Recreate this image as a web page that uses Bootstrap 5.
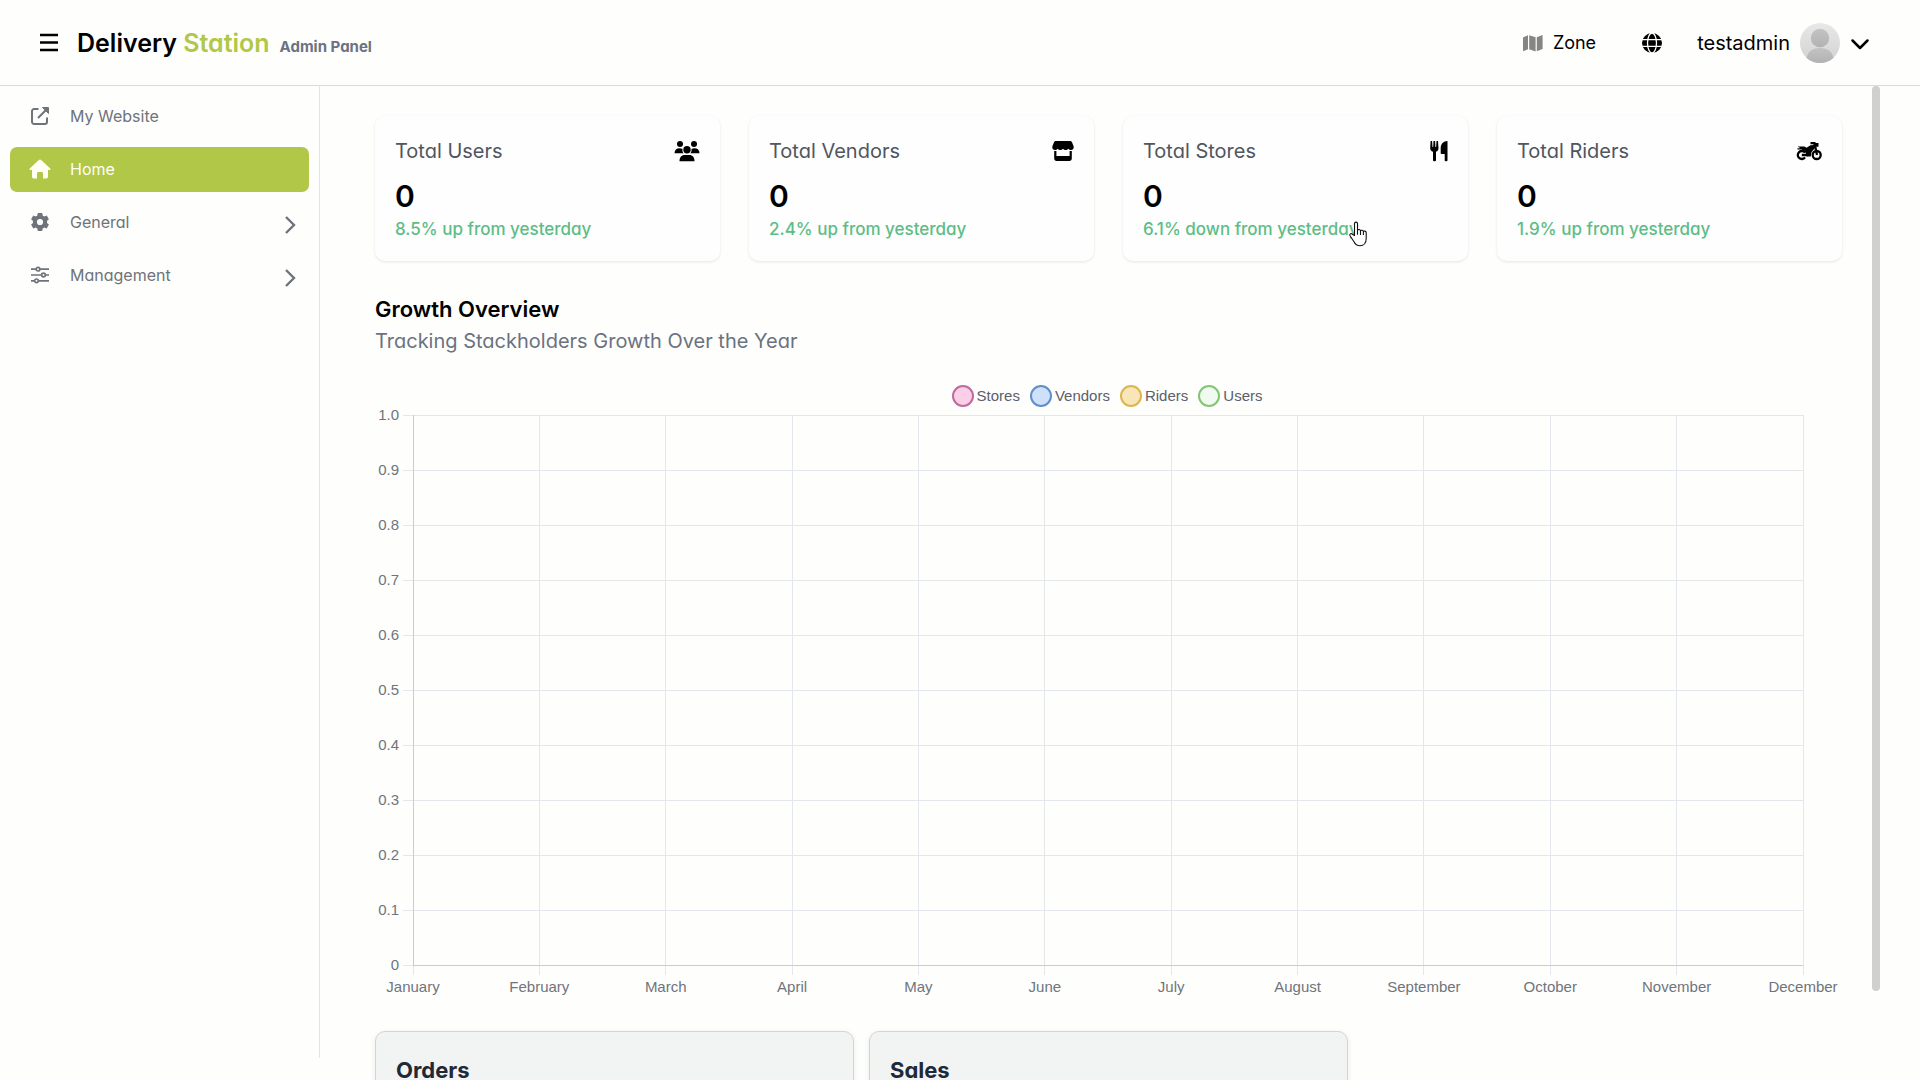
<!DOCTYPE html>
<html lang="en">
<head>
<meta charset="utf-8">
<meta name="viewport" content="width=device-width, initial-scale=1">
<title>Delivery Station Admin Panel</title>
<link href="https://cdn.jsdelivr.net/npm/bootstrap@5.3.0/dist/css/bootstrap.min.css" rel="stylesheet">
<style>
  :root { --brand: #b1c748; --ink-soft: #6f737a; }
  body { font-family: Inter, "Noto Sans", sans-serif; font-feature-settings: "cv11"; background: #fefefd; color: #000; height: 100vh; overflow: hidden; }
  svg { display: block; flex: none; }
  .topbar { height: 86px; border-bottom: 1px solid #d9dbdb; padding: 0 50px 16px 38px; }
  .icon-btn { border: 0; background: none; padding: 0; color: #000; }
  .menu-btn { margin-right: 17px; }
  .brand-link { gap: 10px; }
  .brand-name { font-size: 25px; line-height: 30px; font-weight: 600; color: #000; }
  .brand-name span { color: var(--brand); }
  .brand-tag { font-size: 15px; line-height: 20px; font-weight: 700; color: #6b7280; }
  .zone-link { font-size: 18px; line-height: 24px; color: #000; gap: 9px; }
  .globe-btn { margin: 0 35px 0 46px; }
  .account { font-size: 20px; line-height: 28px; }
  .sidebar { width: 320px; height: calc(100vh - 108px); border-right: 1px solid #e2e3e6; padding: 8px 10px; }
  .side-link { height: 45px; border-radius: 7px; padding: 0 11px 2px 20px; color: var(--ink-soft); font-size: 16px; line-height: 24px; }
  .side-link:hover { color: var(--ink-soft); }
  .side-link.active { background: var(--brand); color: #fffff4; }
  .side-chevron { margin-top: 6px; }
  .main-area { padding: 30px 30px 0 55px; margin-right: 48px; height: calc(100vh - 86px); overflow: hidden; }
  .scroll-thumb { right: 40px; top: 86px; width: 8px; height: calc(100vh - 175px); border-radius: 4px; background: #d0d0ce; }
  .stat-row { --bs-gutter-x: 29px; }
  .stat-card { background: #fefefe; border-radius: 10px; padding: 20px; box-shadow: 0 1px 3px rgba(0,0,0,.1); }
  .stat-title { font-size: 20px; line-height: 30px; color: #4f5660; }
  .stat-value { font-size: 30px; line-height: 36px; font-weight: 600; }
  .stat-note { font-size: 17px; line-height: 24px; font-weight: 500; color: #5cbd85; padding-top: 3px; }
  .growth { padding-top: 33px; }
  .section-title { font-size: 22px; line-height: 30px; font-weight: 600; }
  .section-sub { font-size: 20px; line-height: 30px; color: #6b7280; padding-top: 2px; margin-bottom: 29px; }
  .chart-legend { gap: 10px; padding: 0 2px 8px 0; font: 15px/20px "Liberation Sans", Arial, sans-serif; color: #5b606b; }
  .legend-key { gap: 3px; }
  .swatch { width: 22px; height: 22px; border-radius: 50%; border: 2px solid; }
  .sw-stores { background: #fbcfe8; border-color: #c16a9d; }
  .sw-vendors { background: #cfe0fb; border-color: #5f8fc9; }
  .sw-riders { background: #f9e6b8; border-color: #dcb54c; }
  .sw-users { background: #effaf0; border-color: #83c672; }
  .plot-wrap { padding: 0 39px 0 38px; }
  .plot { width: 100%; height: 550px; overflow: visible; font: 15px "Liberation Sans", Arial, sans-serif; }
  .plot line { stroke: #e3e6ea; shape-rendering: crispEdges; }
  .plot line.axis { stroke: #c9cdd1; }
  .plot text { fill: #70747c; }
  .panels { gap: 15px; padding-top: 66px; }
  .panel { width: 479px; height: 300px; border: 1px solid #d1d5db; border-radius: 10px; background: #f2f4f4; padding: 23px 20px; box-shadow: 0 2px 6px rgba(0,0,0,.08); }
  .panel h2 { font-size: 22px; line-height: 30px; font-weight: 700; color: #1f2937; }
  .pointer { left: 1348px; top: 221px; z-index: 5; }
</style>
<script src="https://cdn.jsdelivr.net/npm/bootstrap@5.3.0/dist/js/bootstrap.bundle.min.js"></script>
</head>
<body>
<header class="topbar d-flex align-items-end justify-content-between">
  <div class="d-flex align-items-center h-100 pt-3">
    <button class="icon-btn menu-btn" type="button" aria-label="Toggle menu">
      <svg width="22" height="22" viewBox="0 0 22 22" stroke="currentColor" stroke-width="2.400"><path d="M2 3h18M2 10.500h18M2 18h18"/></svg>
    </button>
    <a href="#" class="brand-link text-decoration-none d-flex align-items-baseline">
      <span class="brand-name">Delivery <span>Station</span></span>
      <span class="brand-tag">Admin Panel</span>
    </a>
  </div>
  <div class="d-flex align-items-center h-100 pt-3">
    <a href="#" class="zone-link d-flex align-items-center text-decoration-none">
      <svg width="22" height="18" viewBox="0 0 22 18" fill="#858585"><path d="M1 3.500 6 1.200v14L1 17.300zM7.200 1.200l6.400 2v14.200l-6.400-2.100zM14.800 3.200 20.600 1v14l-5.800 2.300z"/></svg>
      <span>Zone</span>
    </a>
    <button class="icon-btn globe-btn" type="button" aria-label="Language">
      <svg width="20" height="20" viewBox="0 0 20 20"><circle cx="10" cy="10" r="10"/><g fill="none" stroke="#fefefd" stroke-width="1.300"><ellipse cx="10" cy="10" rx="4.500" ry="10"/><path d="M0 6.700h20M0 13.300h20"/></g></svg>
    </button>
    <button class="icon-btn account d-flex align-items-center" type="button">
      <span>testadmin</span>
      <svg class="ms-2 me-2" width="44" height="40" viewBox="-2 0 44 40"><defs><linearGradient id="bg" x1="0" y1="0" x2="0" y2="1"><stop stop-color="#e8e8e8"/><stop offset="1" stop-color="#d2d2d2"/></linearGradient><linearGradient id="fg" x1="0" y1="0" x2="0" y2="1"><stop stop-color="#c3c3c3"/><stop offset="1" stop-color="#b2b2b2"/></linearGradient><clipPath id="c"><circle cx="20" cy="20" r="20"/></clipPath></defs><circle cx="20" cy="20" r="20" fill="url(#bg)"/><g clip-path="url(#c)" fill="url(#fg)"><circle cx="20" cy="15" r="9.200"/><path d="M6.500 40V37c0-8 5.500-12 13.500-12s13.500 4 13.500 12v3z"/></g></svg>
      <svg width="20" height="20" viewBox="0 0 20 20" fill="none" stroke="currentColor" stroke-width="2.500" stroke-linecap="round" stroke-linejoin="round"><path d="m2.500 7.500 7.500 7.500L17.500 7.500"/></svg>
    </button>
  </div>
</header>

<div class="d-flex align-items-start">
  <nav class="sidebar d-flex flex-column gap-2 flex-shrink-0">
    <a href="#" class="side-link d-flex align-items-center text-decoration-none">
      <svg width="20" height="20" viewBox="0 0 20 20" fill="none" stroke="currentColor" stroke-width="2"><path d="M8.500 3H4.200A2.200 2.200 0 0 0 2 5.200v10.600A2.200 2.200 0 0 0 4.200 18h10.600a2.200 2.200 0 0 0 2.200-2.200V11.500M8 12 16.500 3.500"/><path d="M12.500 1.500h6v6z" fill="currentColor" stroke-width="1"/></svg>
      <span class="ms-3 ps-1">My Website</span>
    </a>
    <a href="#" class="side-link active d-flex align-items-center text-decoration-none">
      <svg width="20" height="20" viewBox="0 0 20 20" fill="currentColor" overflow="visible"><path d="M8.800 1a1.700 1.700 0 0 1 2.400 0l9 8.400c.7.700.3 1.700-.6 1.700H18v6.700c0 1-.700 1.700-1.700 1.700H13v-5c0-1-.600-1.500-1.500-1.500h-3C7.600 13 7 13.500 7 14.500v5H3.700c-1 0-1.700-.7-1.700-1.700v-6.700H.4c-.9 0-1.300-1-.6-1.700z"/></svg>
      <span class="ms-3 ps-1">Home</span>
    </a>
    <a href="#" class="side-link d-flex align-items-center text-decoration-none">
      <svg width="20" height="20" viewBox="0 0 20 20" fill="currentColor"><path fill-rule="evenodd" d="M7.800 1h4.400l.5 2.500 1.500.9 2.500-.9 2.200 3.800L17 9.100v1.800l1.900 1.700-2.200 3.800-2.500-.8-1.500.9-.5 2.500H7.800l-.5-2.500-1.500-.9-2.500.8-2.200-3.800L3 10.900V9.100L1.100 7.300l2.200-3.800 2.500.9 1.500-.9zM10 6.900a3.100 3.100 0 1 0 0 6.200 3.100 3.100 0 0 0 0-6.200z"/></svg>
      <span class="ms-3 ps-1">General</span>
      <svg class="side-chevron ms-auto" width="16" height="20" viewBox="0 0 16 20" fill="none" stroke="currentColor" stroke-width="2.400"><path d="m4 2 8 8-8 8"/></svg>
    </a>
    <a href="#" class="side-link d-flex align-items-center text-decoration-none">
      <svg width="20" height="20" viewBox="0 0 20 20" fill="none" stroke="currentColor" stroke-width="1.700"><path d="M1 4.200h5M10 4.200h9M1 10h10.500M15.500 10H19M1 15.800h3.500M8.500 15.800H19"/><circle cx="8" cy="4.200" r="1.800"/><circle cx="13.500" cy="10" r="1.800"/><circle cx="6.500" cy="15.800" r="1.800"/></svg>
      <span class="ms-3 ps-1">Management</span>
      <svg class="side-chevron ms-auto" width="16" height="20" viewBox="0 0 16 20" fill="none" stroke="currentColor" stroke-width="2.400"><path d="m4 2 8 8-8 8"/></svg>
    </a>
  </nav>

  <main class="main-area flex-grow-1">
    <div class="row stat-row">
      <div class="col-3"><div class="stat-card">
        <div class="d-flex justify-content-between align-items-center">
          <span class="stat-title">Total Users</span>
          <svg width="26" height="22" viewBox="0 0 26 22"><circle cx="6" cy="4" r="3"/><circle cx="20" cy="4" r="3"/><path d="M.5 13.300C.5 10 2.500 8.200 5.500 8.200c1.300 0 2.200.3 3 .8-.3 1.800.2 3.200 1.200 4.300zM25.500 13.300c0-3.300-2-5.100-5-5.100-1.300 0-2.200.3-3 .8.300 1.800-.2 3.200-1.200 4.300z"/><circle cx="13" cy="9.800" r="3.700"/><path d="M5.500 21.200c0-4 2.200-6.200 5-6.200h5c2.800 0 5 2.200 5 6.200z"/></svg>
        </div>
        <div class="stat-value mt-2 pt-1">0</div>
        <div class="stat-note">8.5% up from yesterday</div>
      </div></div>
      <div class="col-3"><div class="stat-card">
        <div class="d-flex justify-content-between align-items-center">
          <span class="stat-title">Total Vendors</span>
          <svg width="22" height="22" viewBox="0 0 22 22"><path d="M4 1h14c1 0 1.500.4 2 1.300L21.500 6c.8 2.300-.4 4-2.500 4-1.100 0-2-.5-2.700-1.300-.7.800-1.600 1.300-2.600 1.300S11.700 9.500 11 8.700c-.7.800-1.700 1.300-2.700 1.300S6.400 9.500 5.700 8.700C5 9.500 4.100 10 3 10 .9 10-.3 8.300.5 6L2 2.300C2.500 1.400 3 1 4 1z"/><path fill-rule="evenodd" d="M2.200 11h2.200v5h13.200v-5h2.200v7.500c0 1.500-1 2.500-2.400 2.500H4.600c-1.400 0-2.400-1-2.400-2.500z"/></svg>
        </div>
        <div class="stat-value mt-2 pt-1">0</div>
        <div class="stat-note">2.4% up from yesterday</div>
      </div></div>
      <div class="col-3"><div class="stat-card">
        <div class="d-flex justify-content-between align-items-center">
          <span class="stat-title">Total Stores</span>
          <svg width="18" height="22" viewBox="0 0 18 22"><path d="M.6 1h1.500l.4 6h.7l.3-6h1.600l.3 6h.7l.4-6H8l.5 7c.1 2-1 3.200-2.500 3.700V20.500c0 .9-3 .9-3 0V11.700C1.300 11.200.1 10 .2 8zM17.500 1v19.500c0 .9-2.800.9-2.800 0V14h-3.200c-.6 0-.8-.3-.8-.9V8c0-3.800 2.800-7 6.800-7z"/></svg>
        </div>
        <div class="stat-value mt-2 pt-1">0</div>
        <div class="stat-note">6.1% down from yesterday</div>
      </div></div>
      <div class="col-3"><div class="stat-card">
        <div class="d-flex justify-content-between align-items-center">
          <span class="stat-title">Total Riders</span>
          <svg width="26" height="22" viewBox="0 0 26 22"><g fill="none" stroke="#000" stroke-width="2.300"><path d="M9 12.600a4 4 0 1 0 0 4.800"/><circle cx="20.700" cy="15" r="4"/><path d="M14.500 3.200h4L21 15M5.800 15h6"/></g><path d="M1.500 6.500h7l2 1.200 4-2.400 3.200-.3V3h4.800v3.800h-3.200l-1 2-2.800 3.500-.8 4.200h-4l-1-3.500-1.500-2.500-2.700-1H1.500V8.200h3z"/></svg>
        </div>
        <div class="stat-value mt-2 pt-1">0</div>
        <div class="stat-note">1.9% up from yesterday</div>
      </div></div>
    </div>

    <section class="growth">
      <h1 class="section-title mb-0">Growth Overview</h1>
      <p class="section-sub">Tracking Stackholders Growth Over the Year</p>
      <div class="plot-wrap">
        <div class="chart-legend d-flex justify-content-center">
          <span class="legend-key d-flex align-items-center"><i class="swatch sw-stores"></i>Stores</span>
          <span class="legend-key d-flex align-items-center"><i class="swatch sw-vendors"></i>Vendors</span>
          <span class="legend-key d-flex align-items-center"><i class="swatch sw-riders"></i>Riders</span>
          <span class="legend-key d-flex align-items-center"><i class="swatch sw-users"></i>Users</span>
        </div>
        <svg class="plot" id="growthPlot" role="img" aria-label="Growth by month"></svg>
      </div>
    </section>

    <div class="panels d-flex">
      <section class="panel"><h2>Orders</h2></section>
      <section class="panel"><h2>Sales</h2></section>
    </div>
  </main>
</div>

<div class="scroll-thumb position-absolute"></div>
<svg class="pointer position-absolute" width="20" height="26" viewBox="0 0 20 26" fill="#fff" stroke="#111" stroke-width="1.100" stroke-linejoin="round"><path d="M6.500 14.500V2.800c0-2.300 3-2.300 3 0v6.500c.3-1.300 2.800-1.100 3 .6.500-1.200 2.700-.8 2.900.7.600-1 2.800-.7 2.800 1.200v5.700c0 4-2.200 7.300-6.200 7.300-3.300 0-4.800-1.500-6-4l-4-6c-.9-1.700 1-2.900 2.300-1.600zM9.500 9.300v4.500M12.500 10v4M15.400 10.600v3.400"/></svg>

<script>
  const months = ["January","February","March","April","May","June","July","August","September","October","November","December"];
  const plot = document.getElementById("growthPlot");
  const H = 550;
  let out = "";
  for (let i = 0; i <= 10; i++) {
    const y = H - i * H / 10;
    const label = i === 0 ? "0" : (i / 10).toFixed(1);
    out += `<line x1="-10" x2="100%" y1="${y}" y2="${y}"/><text x="-14" y="${y + 5}" text-anchor="end">${label}</text>`;
  }
  months.forEach((m, i) => {
    const x = (i * 100 / 11) + "%";
    out += `<line x1="${x}" x2="${x}" y1="0" y2="${H + 10}"/><text x="${x}" y="${H + 27}" text-anchor="middle">${m}</text>`;
  });
  out += `<line class="axis" x1="0" x2="0" y1="0" y2="${H}"/><line class="axis" x1="0" x2="100%" y1="${H}" y2="${H}"/>`;
  plot.innerHTML = out;
</script>
</body>
</html>
